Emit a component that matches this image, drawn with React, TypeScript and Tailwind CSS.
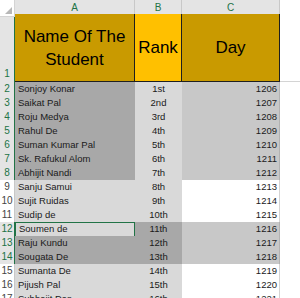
import React from "react";

const names = [
  "Sonjoy Konar",
  "Saikat Pal",
  "Roju Medya",
  "Rahul De",
  "Suman Kumar Pal",
  "Sk. Rafukul Alom",
  "Abhijit Nandi",
  "Sanju Samui",
  "Sujit Ruidas",
  "Sudip de",
  "Soumen de",
  "Raju Kundu",
  "Sougata De",
  "Sumanta De",
  "Pijush Pal",
  "Subhajit Das",
];

const suffix = (n: number) => {
  if (n === 1) return "1st";
  if (n === 2) return "2nd";
  if (n === 3) return "3rd";
  return `${n}th`;
};

const rows = names.map((name, i) => ({
  row: i + 2,
  name,
  rank: suffix(i + 1),
  day: 1206 + i,
}));

const grid = "grid grid-cols-[15px_120px_47px_98px_1fr]";
const font = { fontFamily: '"Liberation Sans", Arial, sans-serif' };

export default function App() {
  return (
    <div className="w-[300px] h-[298px] overflow-hidden bg-white text-[#1a1a1a]" style={font}>
      {/* column letters */}
      <div className={`${grid} h-[14px] text-[10px]`}>
        <div className="relative bg-white border-r border-b border-[#d4d4d4]">
          <div className="absolute right-[2px] bottom-[2px] w-0 h-0 border-l-[7px] border-l-transparent border-b-[7px] border-b-[#b7b7b7]" />
        </div>
        {["A", "B", "C"].map((c) => (
          <div
            key={c}
            className="flex items-center justify-center bg-[#e4e4e4] border-r border-[#c8c8c8] border-b-2 border-b-[#217346] text-[#217346]"
          >
            {c}
          </div>
        ))}
        <div className="bg-white border-b border-[#d4d4d4]" />
      </div>

      {/* header row */}
      <div className={`${grid} h-[68px]`}>
        <div className="flex items-end justify-center pb-[1px] bg-[#e4e4e4] border-r border-[#217346] text-[10px] text-[#217346]">
          1
        </div>
        <div className="flex flex-col items-center justify-center bg-[#c99a00] border-r border-b border-[#1f1f1f] text-[17px] leading-[23px] text-black">
          <span>Name Of The</span>
          <span>Student</span>
        </div>
        <div className="flex items-center justify-center bg-[#ffc000] border-r border-b border-[#1f1f1f] text-[17px] text-black">
          Rank
        </div>
        <div className="flex items-center justify-center bg-[#c99a00] border-r border-b border-[#1f1f1f] text-[17px] text-black">
          Day
        </div>
        <div className="bg-white border-b border-[#d4d4d4]" />
      </div>

      {/* data rows */}
      {rows.map((r) => {
        const topSel = r.row <= 8;
        const midSel = r.row >= 12 && r.row <= 14;
        const sel = topSel || midSel;
        const active = r.row === 12;
        return (
          <div key={r.row} className={`${grid} h-[14px] text-[9.5px] leading-[14px]`}>
            <div
              className={`text-center text-[10px] ${
                sel
                  ? "bg-[#e4e4e4] text-[#217346] border-r border-[#217346]"
                  : "bg-white text-[#444] border-r border-[#c8c8c8]"
              }`}
            >
              {r.row}
            </div>
            <div
              className={`pl-[3px] whitespace-nowrap ${
                active
                  ? "bg-[#d9d9d9] border border-[#217346] leading-[12px]"
                  : sel
                  ? "bg-[#a8a8a8]"
                  : "bg-[#d9d9d9]"
              }`}
            >
              {r.name}
            </div>
            <div className={`text-center ${midSel ? "bg-[#a8a8a8]" : "bg-[#d9d9d9]"}`}>
              {r.rank}
            </div>
            <div
              className={`text-right pr-[2px] border-r border-b ${
                sel ? "bg-[#c8c8c8] border-[#b2b2b2]" : "bg-white border-[#d4d4d4]"
              }`}
            >
              {r.day}
            </div>
            <div className="bg-white border-b border-[#d4d4d4]" />
          </div>
        );
      })}
    </div>
  );
}
